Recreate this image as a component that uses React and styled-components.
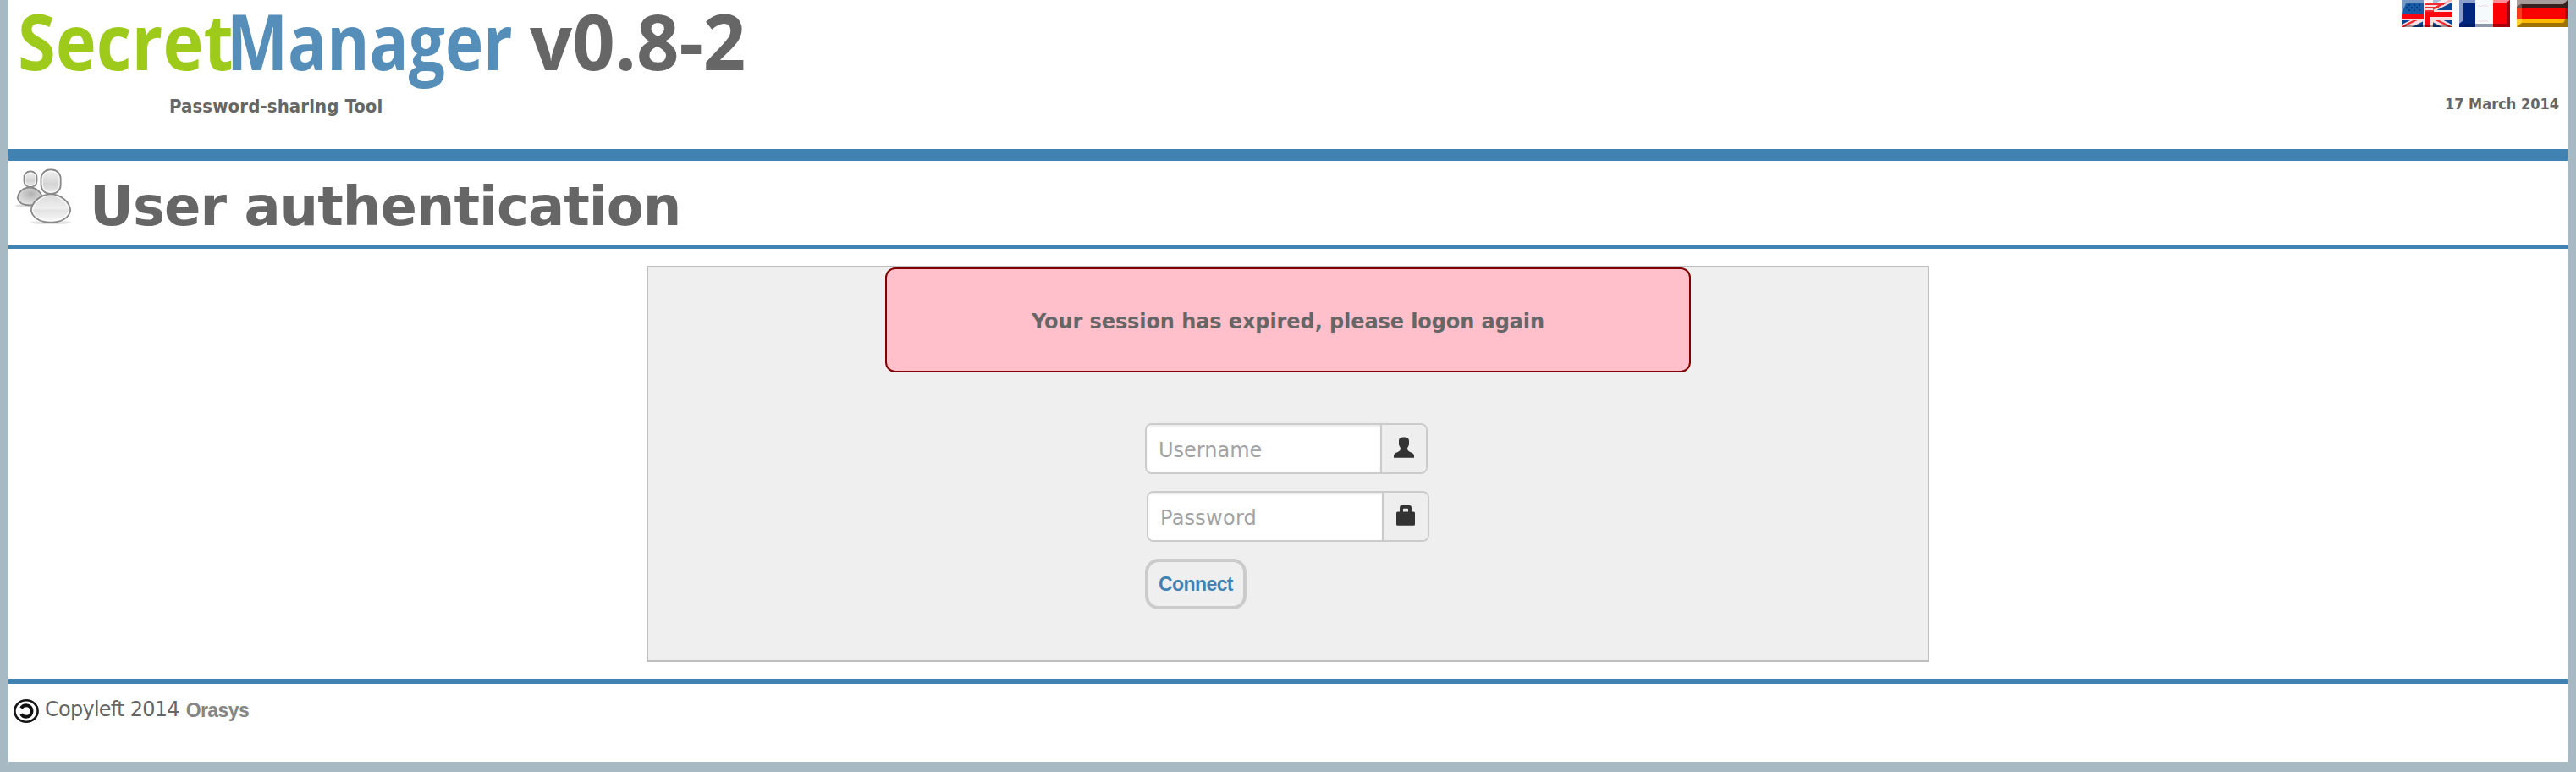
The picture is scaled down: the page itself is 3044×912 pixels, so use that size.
import React from 'react';
import styled, { createGlobalStyle } from 'styled-components';

const blue = '#4082b1';
const text = '#666666';

const Global = createGlobalStyle`
  * { box-sizing: border-box; }
  body {
    margin: 0;
    background: #a7b9c3;
    color: ${text};
    font-family: "DejaVu Sans", Verdana, sans-serif;
  }
`;

const Page = styled.div`
  height: 900px;
  margin: 0 10px 12px;
  background: #fff;
  display: flex;
  flex-direction: column;
`;

const Header = styled.header`
  height: 190px;
  border-bottom: 14px solid ${blue};
  display: flex;
  justify-content: space-between;
`;

const Brand = styled.div`
  padding-left: 11px;
`;

const Logo = styled.div`
  display: flex;
  height: 95px;
  font: 700 92px/95px "Open Sans", sans-serif;
`;

const Word = styled.span`
  flex: none;
  margin-right: ${(p) => -p.$tuck}px;
  color: ${(p) => p.$color};
  white-space: nowrap;
  transform: scaleX(${(p) => p.$scale});
  transform-origin: left;
`;

const Tagline = styled.div`
  margin: 17px 0 0 179px;
  font: 700 22px/27px "DejaVu Sans Condensed", "DejaVu Sans", sans-serif;
  letter-spacing: 0.1px;
`;

const HeaderSide = styled.div`
  display: flex;
  flex-direction: column;
  align-items: flex-end;
`;

const Flags = styled.nav`
  display: flex;
  gap: 8px;
  height: 32px;
`;

const DateText = styled.div`
  margin: 77px 10px 0 0;
  font: 700 18px/27px "DejaVu Sans Condensed", "DejaVu Sans", sans-serif;
`;

const TitleBar = styled.div`
  height: 104px;
  border-bottom: 4px solid ${blue};
  display: flex;
  align-items: flex-start;
  padding: 8px 0 0 8px;
`;

const Title = styled.h1`
  margin: 8px 0 0 20px;
  font-size: 64px;
  line-height: 76px;
  letter-spacing: -0.98px;
  white-space: nowrap;
`;

const LoginPanel = styled.main`
  width: 1516px;
  height: 468px;
  margin: 20px auto;
  border: 2px solid #bebebe;
  background: #efefef;
  display: flex;
  flex-direction: column;
  align-items: center;
`;

const Alert = styled.div`
  width: 952px;
  height: 124px;
  border: 2px solid #800000;
  border-radius: 12px;
  background: #ffbfcb;
  text-align: center;
  font-size: 24px;
  font-weight: 700;
  line-height: 28px;
  letter-spacing: -0.08px;
  padding-top: 48px;
`;

const Form = styled.form`
  width: 338px;
  margin: 60px 0 0 0;
  display: flex;
  flex-direction: column;
  align-items: flex-start;
  gap: 20px;
`;

const Field = styled.label`
  width: 334px;
  height: 60px;
  margin-left: ${(p) => p.$indent || 0}px;
  display: flex;
  border: 2px solid #cbcbcb;
  border-radius: 8px;
  overflow: hidden;
  background: #fff;
`;

const Input = styled.input`
  flex: 1;
  min-width: 0;
  border: 0;
  outline: 0;
  padding: 4px 12px 0 14px;
  background: #fff;
  box-shadow: inset 0 2px 2px rgba(0, 0, 0, 0.075);
  font: 24px "DejaVu Sans", sans-serif;
  letter-spacing: ${(p) => p.$tracking || 0}px;
  &::placeholder { color: #a3a3a3; opacity: 1; }
`;

const AddOn = styled.span`
  width: 54px;
  border-left: 2px solid #cbcbcb;
  background: #eee;
  display: flex;
  justify-content: center;
  padding-top: 14px;
`;

const Connect = styled.button`
  width: 120px;
  height: 60px;
  padding: 0;
  border: 4px solid #cbcbcb;
  border-radius: 16px;
  background: #efefef;
  color: ${blue};
  font: 700 23px "Liberation Sans", Arial, sans-serif;
  letter-spacing: -0.6px;
`;

const Footer = styled.footer`
  border-top: 6px solid ${blue};
  display: flex;
  align-items: flex-start;
  padding: 18px 0 0 6px;
  line-height: 28px;
`;

const Copyleft = styled.span`
  margin: -2px 0 0 7px;
  font-size: 24px;
  letter-spacing: -0.75px;
`;

const Company = styled.span`
  margin: -2px 0 0 8px;
  font: 700 23px/30px "Liberation Sans", Arial, sans-serif;
  letter-spacing: -0.6px;
  color: #868686;
`;

const Svg = styled.svg`
  display: block;
  flex: none;
`;

const UkFlag = () => (
  <Svg width="60" height="32" viewBox="0 0 60 32">
    <rect width="60" height="32" fill="#0b4593" />
    <path d="M25 16L62 -3M28 17L62 35M33 17L-3 35" stroke="#f8dfe2" strokeWidth="8" />
    <path d="M28 15L62 -2M30 18L62 34M28 18L-2 33" stroke="#f22a31" strokeWidth="2.4" />
    <path d="M31 0V32M0 18H60" stroke="#f8dfe2" strokeWidth="12" />
    <path d="M31 14V32M0 20H26M31 17H60" stroke="#fb0510" strokeWidth="6" />
    <rect width="26" height="16" fill="#175aa5" />
    <path d="M0 0H26V4H5L0 16Z" fill="#7598c4" />
    <path d="M8 6H10M14 6H16M20 6H22M5 9H7M11 9H13M17 9H19M8 12H10M14 12H16M20 12H22" stroke="#07397f" strokeWidth="2" />
    <path d="M26 0H60L54 4H26Z" fill="#fff" opacity=".65" />
    <path d="M28 5H50M28 9H44M28 13H38" stroke="#f22a31" strokeWidth="1.8" />
    <path d="M0 32L5 29H55L60 32Z" fill="#000" opacity=".35" />
  </Svg>
);

const FrFlag = () => (
  <Svg width="60" height="32" viewBox="0 0 60 32">
    <rect width="19" height="32" fill="#00257f" />
    <rect x="19" width="21" height="32" fill="#f5fafc" />
    <rect x="40" width="20" height="32" fill="#fc0005" />
    <path d="M0 0H19V4H5V24L0 28Z" fill="#8a9ecb" />
    <path d="M40 0H60L54 4H40Z" fill="#ff8f94" />
    <path d="M60 0V32H40V28H56V4Z" fill="#a70008" />
    <rect x="19" y="28" width="21" height="4" fill="#8c98aa" />
    <path d="M0 32L4 28H19V32Z" fill="#001c66" />
    <path d="M22 8l2-2 2 2 2-2 2 2 2-2 2 2M22 26l2-2 2 2 2-2 2 2 2-2 2 2" stroke="#f3d8e4" fill="none" />
  </Svg>
);

const DeFlag = () => (
  <Svg width="60" height="32" viewBox="0 0 60 32">
    <rect width="60" height="10" fill="#38201f" />
    <rect y="10" width="60" height="12" fill="#fb0000" />
    <rect y="22" width="60" height="10" fill="#ffb800" />
    <path d="M0 0H60L55 5H6L0 10Z" fill="#a79b9b" />
    <path d="M0 8L6 4V10H0Z" fill="#695352" />
    <path d="M0 10H6V22H0Z" fill="#ff3a1c" />
    <path d="M0 22H6V26L0 32Z" fill="#ffd02e" />
    <path d="M60 22V32H0L6 27H55L58 22Z" fill="#9d7200" />
    <path d="M57 10H60V22H57Z" fill="#b60000" />
  </Svg>
);

const UsersIcon = () => (
  <Svg width="68" height="68" viewBox="0 0 68 68">
    <defs>
      <linearGradient id="head" x1="0" y1="0" x2="0" y2="1">
        <stop offset="0" stopColor="#f3f3f3" />
        <stop offset=".6" stopColor="#d4d4d4" />
        <stop offset="1" stopColor="#ededed" />
      </linearGradient>
      <linearGradient id="body" x1="0" y1="0" x2="0" y2="1">
        <stop offset="0" stopColor="#dadada" />
        <stop offset=".5" stopColor="#efefef" />
        <stop offset=".58" stopColor="#e3e3e3" />
        <stop offset="1" stopColor="#fafafa" />
      </linearGradient>
      <radialGradient id="back" cx=".55" cy=".35" r=".65">
        <stop offset="0" stopColor="#b2b2b2" />
        <stop offset="1" stopColor="#e6e6e6" />
      </radialGradient>
    </defs>
    <ellipse cx="17" cy="45" rx="17" ry="2" fill="#ddd" />
    <ellipse cx="42" cy="65" rx="25" ry="2" fill="#e2e2e2" />
    <g stroke="#888" strokeWidth="1.8">
      <path d="M17 23.5C25 23.5 32 30 32 37C31 42 25 44.5 17 44.5C9 44.5 4 41 2.8 36C3.5 29 9 23.5 17 23.5Z" fill="url(#back)" />
      <rect x="10.5" y="4.5" width="15" height="18.5" rx="7" fill="url(#head)" />
      <path d="M42 31.5C54 31.5 65 41 65.2 51C63 60 54 64.6 42 64.6C30 64.6 21 60 18.8 51C19 41 30 31.5 42 31.5Z" fill="url(#body)" />
      <rect x="30.5" y="2.5" width="23.2" height="28.5" rx="10.5" fill="url(#head)" />
    </g>
    <g fill="none" stroke="#fff" strokeWidth="1.2" opacity=".8">
      <rect x="12" y="6" width="12" height="15.5" rx="5.5" />
      <rect x="32.2" y="4.2" width="19.8" height="25" rx="9" />
      <path d="M42 33.2C53 33.2 63 42 63.5 51C61 58.5 53 62.8 42 62.8C31 62.8 23 58.5 20.5 51C21 42 31 33.2 42 33.2Z" />
    </g>
  </Svg>
);

const PersonIcon = () => (
  <Svg width="24" height="25" viewBox="0 0 24 25">
    <path d="M6 5C6 1.5 8.500 .5 12 .5S18 1.5 18 5V9C18 11 16 12 16 14C16 16.5 18 17.5 20.5 18.5C23 19.5 24 21 24 22.5V24.7H0V22.5C0 21 1 19.5 3.5 18.5C6 17.5 8 16.5 8 14C8 12 6 11 6 9Z" fill="#333" />
  </Svg>
);

const LockIcon = () => (
  <Svg width="22" height="25" viewBox="0 0 22 25">
    <path d="M4 8.5V4Q4 .7 7.5 .7H14.5Q18 .7 18 4V8.5H20.5Q22 8.5 22 10V23.2Q22 24.7 20.5 24.7H1.5Q0 24.7 0 23.2V10Q0 8.5 1.5 8.5ZM8 8.5H14V5.5Q14 4.7 13.2 4.7H8.8Q8 4.7 8 5.5Z" fill="#333" fillRule="evenodd" />
  </Svg>
);

const CopyleftIcon = () => (
  <Svg width="30" height="28" viewBox="0 0 30 28">
    <ellipse cx="15" cy="14" rx="13.6" ry="12.7" fill="#fff" stroke="#151515" strokeWidth="2.6" />
    <path d="M9 10.5C10.5 8 12.5 7.2 15 7.2C19.2 7.2 21.5 10.3 21.5 14S19.2 20.8 15 20.8C12.5 20.8 10.5 20 9 17.5" fill="none" stroke="#111" strokeWidth="4" />
  </Svg>
);

export default function App() {
  return (
    <>
      <Global />
      <Page>
        <Header>
          <Brand>
            <Logo>
              <Word $tuck={41.9} $scale={0.883} $color="#9ecb1b">Secret</Word>
              <Word $tuck={48} $scale={0.831} $color="#568eba">Manager</Word>
              <Word $tuck={0} $scale={0.96} $color={text}>v0.8-2</Word>
            </Logo>
            <Tagline>Password-sharing Tool</Tagline>
          </Brand>
          <HeaderSide>
            <Flags>
              <UkFlag />
              <FrFlag />
              <DeFlag />
            </Flags>
            <DateText>17 March 2014</DateText>
          </HeaderSide>
        </Header>
        <TitleBar>
          <UsersIcon />
          <Title>User authentication</Title>
        </TitleBar>
        <LoginPanel>
          <Alert>Your session has expired, please logon again</Alert>
          <Form>
            <Field>
              <Input placeholder="Username" />
              <AddOn><PersonIcon /></AddOn>
            </Field>
            <Field $indent={2}>
              <Input type="password" placeholder="Password" $tracking={0.25} />
              <AddOn><LockIcon /></AddOn>
            </Field>
            <Connect type="button">Connect</Connect>
          </Form>
        </LoginPanel>
        <Footer>
          <CopyleftIcon />
          <Copyleft>Copyleft 2014</Copyleft>
          <Company>Orasys</Company>
        </Footer>
      </Page>
    </>
  );
}
